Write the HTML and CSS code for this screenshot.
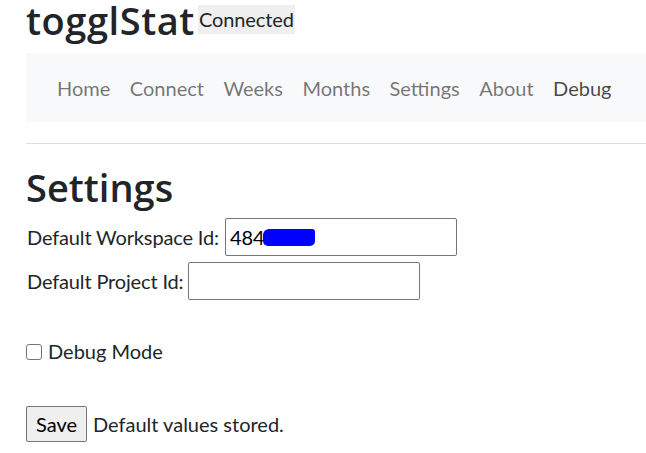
FILE: index.html
```html
<!DOCTYPE html>
<html lang="en">
<head>
<meta charset="utf-8">
<title>togglStat - Settings</title>
<link rel="stylesheet" href="styles.css">
</head>
<body>
<div class="page">
  <header class="brand-row">
    <h1 class="brand">togglStat</h1>
    <span class="status">Connected</span>
  </header>
  <nav class="navbar">
    <ul class="nav-list">
      <li><a class="nav-link" href="#">Home</a></li>
      <li><a class="nav-link" href="#">Connect</a></li>
      <li><a class="nav-link" href="#">Weeks</a></li>
      <li><a class="nav-link" href="#">Months</a></li>
      <li><a class="nav-link" href="#">Settings</a></li>
      <li><a class="nav-link" href="#">About</a></li>
      <li><a class="nav-link active" href="#">Debug</a></li>
    </ul>
  </nav>
  <hr class="divider">
  <main class="content">
    <h2 class="page-title">Settings</h2>
    <div class="field">
      <label class="field-label" for="ws">Default Workspace Id:</label>
      <span class="input-wrap">
        <input class="text-input" id="ws" type="text" value="484">
        <span class="redact"></span>
      </span>
    </div>
    <div class="field field-second">
      <label class="field-label" for="proj">Default Project Id:</label>
      <input class="text-input" id="proj" type="text" value="">
    </div>
    <div class="check-row">
      <input class="check" id="dbg" type="checkbox">
      <label class="check-label" for="dbg">Debug Mode</label>
    </div>
    <div class="save-row">
      <button class="btn" type="button">Save</button>
      <span class="save-msg">Default values stored.</span>
    </div>
  </main>
</div>
</body>
</html>
```
FILE: styles.css
```css
* { box-sizing: border-box; }

html, body {
  margin: 0;
  padding: 0;
  background: #ffffff;
}

body {
  font-family: "Lato", "Noto Sans", "Liberation Sans", sans-serif;
  font-size: 20px;
  line-height: 29px;
  color: #212529;
}

.page {
  padding-left: 26px;
}

.brand-row {
  display: flex;
  align-items: flex-start;
  height: 40px;
}

.brand {
  margin: 0;
  font-family: "Open Sans", "Noto Sans", sans-serif;
  font-size: 38px;
  line-height: 40px;
  font-weight: 600;
  letter-spacing: 0.55px;
  color: #212529;
}

.status {
  margin-top: 5px;
  margin-left: 3px;
  padding: 0 1px;
  line-height: 29px;
  font-size: 20px;
  letter-spacing: -0.1px;
  background: #efefef;
  color: #212529;
}

.navbar {
  margin-top: 13px;
  height: 69px;
  padding: 21px 0 19px 21px;
  background: #f8f9fa;
}

.nav-list {
  list-style: none;
  margin: 0;
  padding: 0;
  display: flex;
}

.nav-link {
  display: block;
  padding: 0 9.75px;
  line-height: 29px;
  color: rgba(0, 0, 0, 0.55);
  text-decoration: none;
}

.nav-list li:first-child .nav-link {
  padding-left: 10px;
}

.nav-link.active {
  color: rgba(0, 0, 0, 0.72);
}

.divider {
  margin: 21px 0 0 0;
  border: 0;
  border-top: 1px solid #dedfe0;
  height: 0;
}

.page-title {
  margin: 23px 0 0 0;
  font-family: "Open Sans", "Noto Sans", sans-serif;
  font-size: 38px;
  line-height: 40px;
  font-weight: 600;
}

.field {
  display: flex;
  align-items: center;
  gap: 6px;
  height: 38px;
  margin-top: 11px;
}

.field-second {
  margin-top: 6px;
  gap: 5px;
}

.field-label {
  margin-left: 1px;
  letter-spacing: -0.15px;
}

.input-wrap {
  position: relative;
  display: inline-block;
  height: 38px;
}

.text-input {
  width: 232px;
  height: 38px;
  padding: 0 4px;
  border: 1px solid #767676;
  border-radius: 2px;
  font-family: inherit;
  font-size: 20px;
  color: #000000;
  background: #ffffff;
  outline: none;
}

.redact {
  position: absolute;
  left: 38px;
  top: 11px;
  width: 52px;
  height: 17px;
  background: #0000ff;
  border-radius: 6px 3px 5px 5px;
}

.check-row {
  display: flex;
  align-items: center;
  gap: 6px;
  height: 29px;
  margin-top: 37px;
}

.check {
  appearance: none;
  -webkit-appearance: none;
  margin: 0;
  width: 16px;
  height: 16px;
  border: 1px solid #767676;
  border-radius: 3px;
  background: #ffffff;
}

.save-row {
  display: flex;
  align-items: center;
  gap: 6px;
  margin-top: 40px;
}

.btn {
  height: 36px;
  width: 61px;
  padding: 0;
  border: 1px solid #767676;
  border-radius: 2px;
  background: #efefef;
  font-family: inherit;
  font-size: 20px;
  color: #000000;
}
```
